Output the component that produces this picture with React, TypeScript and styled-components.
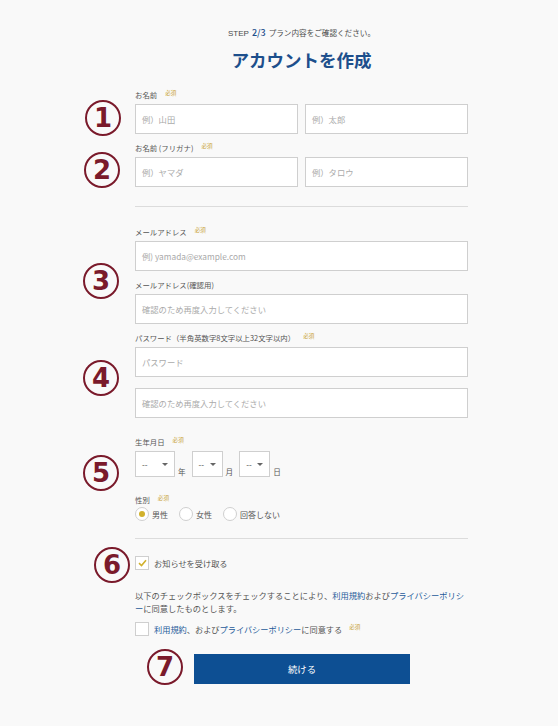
import React from "react";
import styled, { createGlobalStyle } from "styled-components";

const GlobalStyle = createGlobalStyle`
  html, body { margin: 0; padding: 0; background: #f9f9f9; }
  body { font-family: "Noto Sans CJK JP", "Noto Sans", sans-serif; color: #4a4a4a; }
  * { box-sizing: border-box; }
`;

const Page = styled.div`
  position: relative;
  width: 558px;
  min-height: 726px;
  padding: 27px 0 0 135px;
`;

const Column = styled.div`
  width: 333px;
  display: flex;
  flex-direction: column;
`;

const Step = styled.div`
  text-align: center;
  font-size: 7.6px;
  line-height: 12px;
  color: #4a4a4a;
  b { color: #1d4f8c; font-weight: 500; font-size: 9px; margin: 0 3px; }
  span.en { font-family: "Liberation Sans", sans-serif; font-size: 8px; }
`;

const Title = styled.h1`
  margin: 8px 0 0;
  text-align: center;
  font-size: 17.5px;
  line-height: 24px;
  font-weight: 700;
  color: #1d4f8c;
`;

const Field = styled.div<{ $mt?: number }>`
  display: flex;
  flex-direction: column;
  margin-top: ${(p) => p.$mt ?? 8}px;
`;

const Label = styled.div`
  font-size: 7.4px;
  line-height: 12px;
  margin-bottom: 3px;
  color: #555;
  display: flex;
  align-items: center;
`;

const Required = styled.span<{ $ml?: number }>`
  font-size: 5.6px;
  color: #c9a53a;
  margin-left: ${(p) => p.$ml ?? 8}px;
  position: relative;
  top: -2px;
`;

const Row = styled.div`
  display: flex;
  gap: 7px;
  & > * { flex: 1 1 0; }
`;

const Input = styled.div<{ $mt?: number }>`
  height: 30px;
  flex-shrink: 0;
  background: #fff;
  border: 1px solid #cfcfcf;
  display: flex;
  align-items: center;
  padding-left: 6px;
  font-size: 8.3px;
  color: #aaa;
  margin-top: ${(p) => p.$mt ?? 0}px;
`;

const Divider = styled.hr<{ $mt: number; $mb: number }>`
  border: none;
  border-top: 1px solid #dcdcdc;
  margin: ${(p) => p.$mt}px 0 ${(p) => p.$mb}px;
  width: 100%;
`;

const DateRow = styled.div`
  display: flex;
  align-items: flex-end;
`;

const Select = styled.div<{ $w: number }>`
  width: ${(p) => p.$w}px;
  height: 26px;
  background: #fff;
  border: 1px solid #cfcfcf;
  display: flex;
  align-items: center;
  justify-content: space-between;
  padding: 0 6px 0 6px;
  font-size: 8px;
  color: #444;
`;

const Caret = styled.span`
  width: 0;
  height: 0;
  border-left: 3px solid transparent;
  border-right: 3px solid transparent;
  border-top: 3px solid #666;
`;

const Unit = styled.span`
  font-size: 7.6px;
  color: #555;
  margin: 0 6px 0 3px;
  line-height: 10px;
`;

const RadioRow = styled.div`
  display: flex;
  align-items: center;
  height: 14px;
  margin-top: -2px;
  gap: 11px;
`;

const RadioItem = styled.label`
  display: flex;
  align-items: center;
  gap: 3px;
  font-size: 8px;
  color: #555;
`;

const RadioCircle = styled.span<{ $on?: boolean }>`
  width: 14px;
  height: 14px;
  border-radius: 50%;
  background: #fff;
  border: 1px solid #cfcfcf;
  display: flex;
  align-items: center;
  justify-content: center;
  &::after {
    content: "";
    width: 6px;
    height: 6px;
    border-radius: 50%;
    background: ${(p) => (p.$on ? "#d1b12c" : "transparent")};
  }
`;

const CheckRow = styled.label<{ $mt: number }>`
  display: flex;
  align-items: center;
  gap: 5px;
  margin-top: ${(p) => p.$mt}px;
  font-size: 8.2px;
  color: #555;
`;

const Box = styled.span`
  width: 14px;
  height: 14px;
  background: #fff;
  border: 1px solid #cfcfcf;
  display: flex;
  align-items: center;
  justify-content: center;
`;

const Para = styled.p`
  margin: 19px 0 0;
  font-size: 8.25px;
  line-height: 12.5px;
  color: #555;
`;

const Line = styled.span`
  display: block;
  white-space: nowrap;
`;

const Link = styled.a`
  color: #1f5b99;
  text-decoration: none;
`;

const Button = styled.button`
  margin: 18px 0 0 59px;
  width: 216px;
  height: 30px;
  border: none;
  background: #0d4f93;
  color: #fff;
  font-family: "Noto Sans CJK JP", sans-serif;
  font-size: 9.4px;
`;

const Marker = styled.div<{ $x: number; $y: number }>`
  position: absolute;
  left: ${(p) => p.$x - 18}px;
  top: ${(p) => p.$y - 18}px;
  width: 36px;
  height: 36px;
  border-radius: 50%;
  border: 2.5px solid #7a1a2b;
  color: #7a1a2b;
  display: flex;
  align-items: center;
  justify-content: center;
  font-family: "DejaVu Sans", "Liberation Sans", sans-serif;
  font-weight: 700;
  font-size: 26px;
  line-height: 1;
`;

const markers: [string, number, number][] = [
  ["1", 103, 118],
  ["2", 102, 170],
  ["3", 101, 281],
  ["4", 101, 378],
  ["5", 101, 473],
  ["6", 112, 565],
  ["7", 165, 667],
];

const Check = () => (
  <svg width="9" height="8" viewBox="0 0 9 8">
    <path d="M1 4.2 L3.5 6.5 L8 1.2" fill="none" stroke="#d1b12c" strokeWidth="1.6" />
  </svg>
);

export default function App() {
  return (
    <>
      <GlobalStyle />
      <Page>
        <Column>
          <Step>
            <span className="en">STEP</span>
            <b>2/3</b>
            プラン内容をご確認ください。
          </Step>
          <Title>アカウントを作成</Title>

          <Field $mt={17}>
            <Label>
              お名前<Required>必須</Required>
            </Label>
            <Row>
              <Input>例）山田</Input>
              <Input>例）太郎</Input>
            </Row>
          </Field>
          <Field>
            <Label>
              お名前 (フリガナ)<Required>必須</Required>
            </Label>
            <Row>
              <Input>例）ヤマダ</Input>
              <Input>例）タロウ</Input>
            </Row>
          </Field>

          <Divider $mt={19} $mb={19} />

          <Field $mt={0}>
            <Label>
              メールアドレス<Required>必須</Required>
            </Label>
            <Input>例) yamada@example.com</Input>
          </Field>
          <Field>
            <Label>メールアドレス(確認用)</Label>
            <Input>確認のため再度入力してください</Input>
          </Field>
          <Field>
            <Label>
              パスワード（半角英数字8文字以上32文字以内）<Required>必須</Required>
            </Label>
            <Input>パスワード</Input>
            <Input $mt={11}>確認のため再度入力してください</Input>
          </Field>

          <Field $mt={18}>
            <Label>
              生年月日<Required>必須</Required>
            </Label>
            <DateRow>
              <Select $w={40}>
                --<Caret />
              </Select>
              <Unit>年</Unit>
              <Select $w={31}>
                --<Caret />
              </Select>
              <Unit>月</Unit>
              <Select $w={31}>
                --<Caret />
              </Select>
              <Unit>日</Unit>
            </DateRow>
          </Field>

          <Field $mt={17}>
            <Label>
              性別<Required>必須</Required>
            </Label>
            <RadioRow>
              <RadioItem>
                <RadioCircle $on />
                男性
              </RadioItem>
              <RadioItem>
                <RadioCircle />
                女性
              </RadioItem>
              <RadioItem>
                <RadioCircle />
                回答しない
              </RadioItem>
            </RadioRow>
          </Field>

          <Divider $mt={17} $mb={0} />

          <CheckRow $mt={17}>
            <Box>
              <Check />
            </Box>
            お知らせを受け取る
          </CheckRow>

          <Para>
            <Line>
              以下のチェックボックスをチェックすることにより、<Link>利用規約</Link>および
              <Link>プライバシーポリシ</Link>
            </Line>
            <Line>
              <Link>ー</Link>に同意したものとします。
            </Line>
          </Para>

          <CheckRow $mt={8}>
            <Box />
            <span>
              <Link>利用規約</Link>、および<Link>プライバシーポリシー</Link>に同意する
            </span>
            <Required $ml={2}>必須</Required>
          </CheckRow>

          <Button>続ける</Button>
        </Column>
        {markers.map(([n, x, y]) => (
          <Marker key={n} $x={x} $y={y}>
            {n}
          </Marker>
        ))}
      </Page>
    </>
  );
}
